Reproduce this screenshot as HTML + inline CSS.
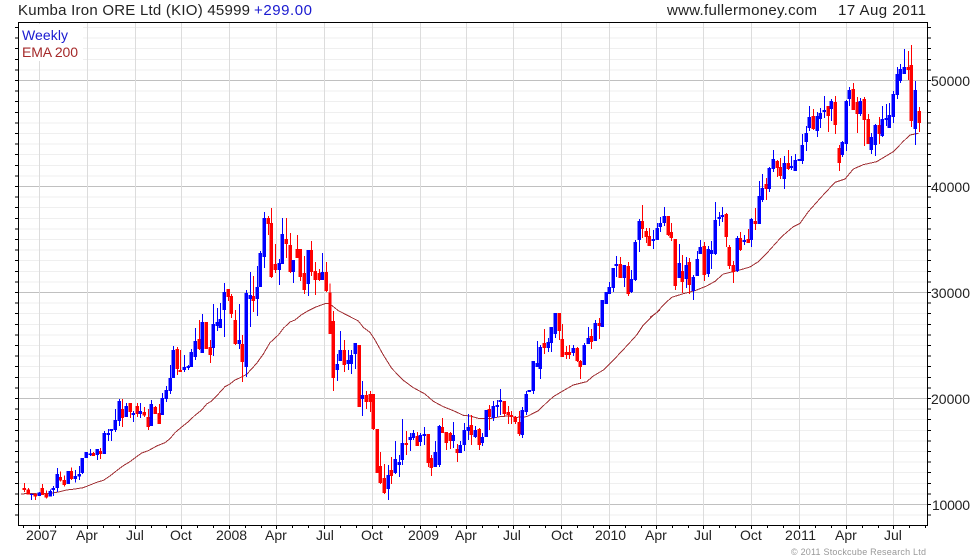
<!DOCTYPE html>
<html><head><meta charset="utf-8"><title>Kumba Iron ORE Ltd</title>
<style>
html,body{margin:0;padding:0;background:#fff}
svg{display:block}
text{font-family:"Liberation Sans",sans-serif;font-size:14px;fill:#222}
.w{fill:none;stroke-width:3;shape-rendering:crispEdges}
.b{fill:none;stroke-width:10;shape-rendering:crispEdges}
.R{stroke:#f00}.B{stroke:#00f}
.e{fill:none;stroke:#a03034;stroke-width:3;stroke-linejoin:round;shape-rendering:crispEdges}
</style></head><body>
<svg width="980" height="560" viewBox="0 0 980 560" xmlns="http://www.w3.org/2000/svg">
<rect width="980" height="560" fill="#fff"/>
<g fill="none" shape-rendering="crispEdges">
<path d="M472.5 27V516" stroke="#efefef" stroke-width="909" stroke-dasharray="1 9.6"/>
<path d="M18 80.5H927M18 186.5H927M18 292.5H927M18 398.5H927M18 504.5H927" stroke="#c0c0c0"/>
<path d="M39.5 23V525M87.5 23V525M135.5 23V525M181.5 23V525M229.5 23V525M276.5 23V525M324.5 23V525M372.5 23V525M420.5 23V525M466.5 23V525M513.5 23V525M561.5 23V525M609.5 23V525M656.5 23V525M703.5 23V525M751.5 23V525M799.5 23V525M846.5 23V525M893.5 23V525" stroke="#dcdcdc" stroke-width="1.4"/>
</g>
<rect x="19" y="24" width="64" height="37" fill="#fff"/>
<g fill="none" stroke="#000" shape-rendering="crispEdges">
<path d="M18.5 22.5H927.5V525.5H18.5Z"/>
<path d="M16.5 27V516" stroke-width="3" stroke-dasharray="1 9.6"/>
<path d="M929.5 27V516" stroke-width="3" stroke-dasharray="1 9.6"/>
<path d="M23.5 526v2M39.5 526v3M55.5 526v2M71.5 526v2M87.5 526v3M103.5 526v2M119.5 526v2M135.5 526v3M151.5 526v2M166.5 526v2M181.5 526v3M197.5 526v2M213.5 526v2M229.5 526v3M245.5 526v2M261.5 526v2M276.5 526v3M292.5 526v2M308.5 526v2M324.5 526v3M340.5 526v2M356.5 526v2M372.5 526v3M388.5 526v2M404.5 526v2M420.5 526v3M436.5 526v2M451.5 526v2M466.5 526v3M482.5 526v2M498.5 526v2M513.5 526v3M529.5 526v2M545.5 526v2M561.5 526v3M577.5 526v2M593.5 526v2M609.5 526v3M625.5 526v2M641.5 526v2M656.5 526v3M672.5 526v2M688.5 526v2M703.5 526v3M719.5 526v2M735.5 526v2M751.5 526v3M767.5 526v2M783.5 526v2M799.5 526v3M815.5 526v2M831.5 526v2M846.5 526v3M862.5 526v2M878.5 526v2M893.5 526v3M909.5 526v2M925.5 526v2"/>
</g>

<g transform="translate(0,200) scale(.33333)">
<path class="e" d="M63 882L90 880L120 882L150 880L175 876L200 870L225 867L250 863L270 855L290 847L310 841L330 828L350 812L370 797L390 785L410 770L425 759L445 752L470 738L495 728L510 716L525 698L545 681L565 665L585 646L605 630L620 612L635 603L655 582L675 560L690 552L705 540L725 531L740 523L770 490L790 462L810 428L835 405L850 385L870 366L885 360L905 344L925 332L945 322L975 311L990 310"/>
<path class="w R" d="M73 849V876M85 864V884M106 880V900M127 852V885M139 872V896M181 815V845M193 826V860M214 803V840M280 756V768M301 744V777M367 597V681M391 609V654M412 609V651M433 621V651M445 627V690M466 618V642M478 612V672M532 441V525M541 450V516M598 360V450M619 366V447M631 420V489M685 267V303M694 282V354M706 330V435M727 405V546M760 228V336M805 48V105M814 24V234M826 132V219M859 54V174M871 99V219M892 105V174M901 147V243M913 168V282M934 123V228M946 186V285M958 207V243M979 186V276"/>
<path class="b R" d="M73 864V870M85 868V884M106 882V890M127 864V885M139 880V893M181 831V842M193 840V855M214 813V837M280 759V768M301 753V762M367 627V654M391 609V636M412 618V642M433 636V646M445 651V681M466 621V642M478 639V672M532 447V507M541 510V516M598 417V447M619 366V447M631 441V465M685 267V291M694 288V342M706 360V432M727 432V486M760 288V303M805 54V72M814 69V231M826 192V210M859 117V132M871 135V216M892 147V174M901 147V231M913 219V270M934 150V216M946 213V240M958 219V240M979 216V273"/>
<path class="w B" d="M95 880V900M118 876V888M151 868V890M160 858V888M172 804V876M205 813V852M226 810V848M238 798V840M247 774V822M259 756V774M271 747V768M292 747V780M313 693V762M325 687V723M334 687V723M346 627V696M358 597V678M379 609V651M400 633V666M421 609V654M454 600V678M487 579V645M499 558V606M511 495V582M520 438V534M553 465V516M565 495V510M574 447V501M586 384V480M607 342V459M640 312V468M652 324V393M661 309V384M673 249V411M718 312V447M739 270V531M751 216V381M772 198V348M781 153V261M793 36V204M838 177V255M847 54V192M880 180V249M925 150V288M967 159V240"/>
<path class="b B" d="M95 882V885M118 877V888M151 873V890M160 864V870M172 822V864M205 813V852M226 828V837M238 822V829M247 774V819M259 756V774M271 760V765M292 747V765M313 699V762M325 699V705M334 687V693M346 660V690M358 603V663M379 618V651M400 639V645M421 633V642M454 612V678M487 594V645M499 570V597M511 534V573M520 450V534M553 501V510M565 498V504M574 456V501M586 423V471M607 366V459M640 372V444M652 366V378M661 357V384M673 276V330M718 420V432M739 279V501M751 285V297M772 261V297M781 159V261M793 54V171M838 189V210M847 102V192M880 180V216M925 150V252M967 216V240"/>
</g>

<g transform="translate(330,200) scale(.33333)">
<path class="e" d="M5 316L25 332L60 350L85 363L100 382L120 397L135 420L160 465L185 505L220 541L250 563L285 582L310 604L340 620L370 632L400 646L420 648L445 655L480 656L510 650L535 648L560 652L590 650L625 632L650 608L670 590L700 572L730 555L770 545L790 528L820 510L860 470L890 438L920 405L940 375L965 350L990 330"/>
<path class="w R" d="M0 250V402M10 333V573M43 420V516M88 435V621M109 573V627M121 573V636M130 582V690M142 687V819M151 756V852M163 792V882M184 771V852M229 693V765M262 696V738M295 702V801M304 765V828M337 654V699M349 696V750M361 696V747M382 732V786M424 645V735M448 684V750M478 615V690M523 603V648M535 618V672M544 633V672M556 648V672M568 633V708M643 387V462M688 339V420M697 372V471M709 438V477M718 435V477M742 441V486M751 480V537M784 387V447M808 354V417M871 171V234M895 186V288M937 15V114M949 84V129M958 84V138"/>
<path class="b R" d="M0 277V402M10 363V534M43 450V495M88 435V621M109 585V606M121 582V606M130 582V687M142 687V819M151 798V849M163 834V879M184 810V828M229 729V735M262 708V738M295 702V789M304 774V804M337 681V699M349 696V729M361 699V723M382 747V759M424 675V705M448 687V735M478 627V651M523 603V642M535 636V645M544 645V651M556 651V666M568 666V702M643 429V444M688 339V393M697 417V471M709 456V465M718 456V465M742 444V483M751 483V501M784 408V426M808 369V378M871 192V234M895 198V282M937 63V87M949 93V111M958 108V138"/>
<path class="w B" d="M22 462V543M31 393V483M55 450V510M64 450V522M76 429V507M97 543V648M175 795V900M196 723V822M208 765V831M217 657V795M241 699V753M250 690V720M271 699V738M283 681V735M316 723V801M328 675V801M370 666V744M391 723V759M403 669V753M415 642V720M436 678V714M457 699V738M469 630V711M490 603V663M502 600V651M511 567V645M577 621V714M589 573V645M598 570V576M610 483V582M622 423V501M631 435V537M655 414V456M664 381V456M676 339V414M730 435V468M763 429V495M775 381V432M796 360V423M817 300V381M829 276V312M838 246V282M850 204V276M859 168V231M883 195V261M904 210V279M916 120V243M928 57V156M970 90V147M982 69V120"/>
<path class="b B" d="M22 492V510M31 450V483M55 480V492M64 465V492M76 429V462M97 585V597M175 825V867M196 777V819M208 786V795M217 729V780M241 711V720M250 699V714M271 705V726M283 702V708M316 756V801M328 678V795M370 705V723M391 735V759M403 690V735M415 681V693M436 690V711M457 711V729M469 630V711M490 618V654M502 615V621M511 600V606M577 630V705M589 582V636M598 570V576M610 483V573M622 489V501M631 441V507M655 426V444M664 381V429M676 339V402M730 444V459M763 435V495M775 414V432M796 369V423M817 300V381M829 276V312M838 261V282M850 204V264M859 192V198M883 195V234M904 237V276M916 126V240M928 63V120M970 117V123M982 84V120"/>
</g>

<g transform="translate(650,40) scale(.33333)">
<path class="e" d="M0 832L20 818L40 795L65 772L100 761L135 752L170 738L195 724L220 702L262 692L300 681L325 665L350 640L395 590L430 560L450 550L475 515L515 470L555 427L585 417L610 387L640 374L680 365L730 335L760 304L780 285L805 280"/>
<path class="w R" d="M55 528V588M64 549V603M76 597V750M97 645V759M118 654V762M163 606V723M229 519V621M238 615V687M250 663V729M271 576V633M295 567V609M316 504V570M349 414V480M382 360V411M391 354V417M415 330V390M490 207V270M535 198V276M556 168V282M568 315V393M610 129V210M622 171V279M643 171V318M655 222V312M688 231V312M775 33V120M784 15V261M808 201V276"/>
<path class="b R" d="M55 528V585M64 576V594M76 597V738M97 693V726M118 666V735M163 618V705M229 522V591M238 621V678M250 675V696M271 594V630M295 597V609M316 543V552M349 432V447M382 363V384M391 381V408M415 369V387M490 228V267M535 198V228M556 186V255M568 324V369M610 147V210M622 186V222M643 177V240M655 237V312M688 255V282M775 81V90M784 75V243M808 213V249"/>
<path class="w B" d="M10 570V627M22 549V600M31 531V576M43 501V558M88 612V714M109 651V744M130 705V780M142 633V708M151 600V642M175 618V711M184 603V687M196 486V645M208 516V558M217 501V546M262 588V696M283 585V615M304 534V621M328 423V552M337 402V486M358 381V456M370 330V396M403 348V447M424 348V390M436 342V393M448 357V363M457 282V372M469 258V333M478 198V273M502 216V291M511 204V264M523 168V234M544 177V243M577 303V351M589 180V333M598 141V198M631 174V228M664 279V342M676 252V348M697 198V291M709 192V258M718 189V264M730 153V249M742 81V177M751 72V129M763 27V102M796 123V315"/>
<path class="b B" d="M10 597V603M22 564V600M31 549V561M43 528V549M88 669V714M109 675V717M130 711V753M142 657V708M151 621V642M175 627V702M184 630V642M196 540V642M208 531V537M217 525V531M262 594V693M283 600V606M304 537V600M328 468V552M337 444V480M358 384V447M370 357V387M403 369V417M424 378V384M436 360V393M448 357V363M457 315V363M469 279V306M478 231V264M502 228V273M511 219V237M523 210V216M544 183V207M577 306V345M589 183V312M598 150V177M631 183V222M664 291V330M676 255V315M697 237V288M709 234V240M718 225V264M730 162V231M742 102V165M751 87V123M763 81V102M796 150V267"/>
</g>

<text x="18" y="15" style="font-size:15px" textLength="232" lengthAdjust="spacing">Kumba Iron ORE Ltd (KIO) 45999</text>
<text x="254" y="15" style="font-size:15px;fill:#1a1ad0" textLength="58" lengthAdjust="spacing">+299.00</text>
<text x="667" y="15" style="font-size:15px" textLength="150" lengthAdjust="spacing">www.fullermoney.com</text>
<text x="838" y="15" style="font-size:15px" textLength="88" lengthAdjust="spacing">17 Aug 2011</text>
<text x="22" y="40" style="fill:#1a1ad0" textLength="46" lengthAdjust="spacing">Weekly</text>
<text x="22" y="57" style="fill:#a52a2a" textLength="56" lengthAdjust="spacing">EMA 200</text>
<g>
<text x="931" y="86" textLength="39" lengthAdjust="spacing">50000</text>
<text x="931" y="192" textLength="39" lengthAdjust="spacing">40000</text>
<text x="931" y="298" textLength="39" lengthAdjust="spacing">30000</text>
<text x="931" y="404" textLength="39" lengthAdjust="spacing">20000</text>
<text x="932" y="510" textLength="38" lengthAdjust="spacing">10000</text>
</g>
<g>
<text x="26" y="540" textLength="31" lengthAdjust="spacing">2007</text>
<text x="76" y="540">Apr</text>
<text x="126" y="540">Jul</text>
<text x="170" y="540">Oct</text>
<text x="216" y="540" textLength="31" lengthAdjust="spacing">2008</text>
<text x="265" y="540">Apr</text>
<text x="316" y="540">Jul</text>
<text x="361" y="540">Oct</text>
<text x="408" y="540" textLength="31" lengthAdjust="spacing">2009</text>
<text x="455" y="540">Apr</text>
<text x="503" y="540">Jul</text>
<text x="551" y="540">Oct</text>
<text x="595" y="540" textLength="31" lengthAdjust="spacing">2010</text>
<text x="645" y="540">Apr</text>
<text x="694" y="540">Jul</text>
<text x="740" y="540">Oct</text>
<text x="785" y="540" textLength="31" lengthAdjust="spacing">2011</text>
<text x="835" y="540">Apr</text>
<text x="884" y="540">Jul</text>
</g>
<text x="791" y="555" style="font-size:9px;fill:#999" textLength="135" lengthAdjust="spacing">© 2011 Stockcube Research Ltd</text>
</svg>
</body></html>
